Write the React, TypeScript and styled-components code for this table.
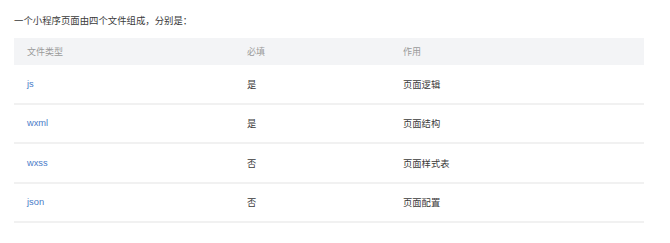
import styled, { createGlobalStyle } from 'styled-components'

const GlobalStyle = createGlobalStyle`
  body {
    margin: 0;
    background: #ffffff;
    font-family: "Liberation Sans", "Noto Sans CJK SC", sans-serif;
  }
`

interface IRow {
  type: string
  required: string
  usage: string
}

const rows: IRow[] = [
  { type: 'js', required: '是', usage: '页面逻辑' },
  { type: 'wxml', required: '是', usage: '页面结构' },
  { type: 'wxss', required: '否', usage: '页面样式表' },
  { type: 'json', required: '否', usage: '页面配置' },
]

export default function App() {
  return (
    <>
      <GlobalStyle/>
      <Page>
        <Intro>一个小程序页面由四个文件组成，分别是：</Intro>
        <Table>
          <HeadRow>
            <HeadCell>文件类型</HeadCell>
            <HeadCell>必填</HeadCell>
            <HeadCell>作用</HeadCell>
          </HeadRow>
          {rows.map((row) => (
            <BodyRow key={row.type}>
              <Cell $link>{row.type}</Cell>
              <Cell>{row.required}</Cell>
              <Cell>{row.usage}</Cell>
            </BodyRow>
          ))}
        </Table>
      </Page>
    </>
  )
}

const Page = styled.div`
  width: 630px;
  padding: 13px 26px 0 14px;
`
const Intro = styled.p`
  margin: 0 0 9px;
  font-size: 9.4px;
  line-height: 16px;
  color: #3a3a3a;
`
const Table = styled.div`
  display: grid;
`
const HeadRow = styled.div`
  display: grid;
  grid-template-columns: 220px 156px 1fr;
  height: 27px;
  align-items: center;
  background: #f3f4f6;
`
const HeadCell = styled.div`
  padding-left: 13px;
  font-size: 9px;
  color: #9a9a9a;
`
const BodyRow = styled.div`
  display: grid;
  grid-template-columns: 220px 156px 1fr;
  height: 37.5px;
  align-items: center;
  border-bottom: 2px solid #f1f1f1;
`
const Cell = styled.div<{ $link?: boolean }>`
  padding-left: 13px;
  font-size: 9.3px;
  color: ${(p) => (p.$link ? '#4a7cc8' : '#3a3a3a')};
`
